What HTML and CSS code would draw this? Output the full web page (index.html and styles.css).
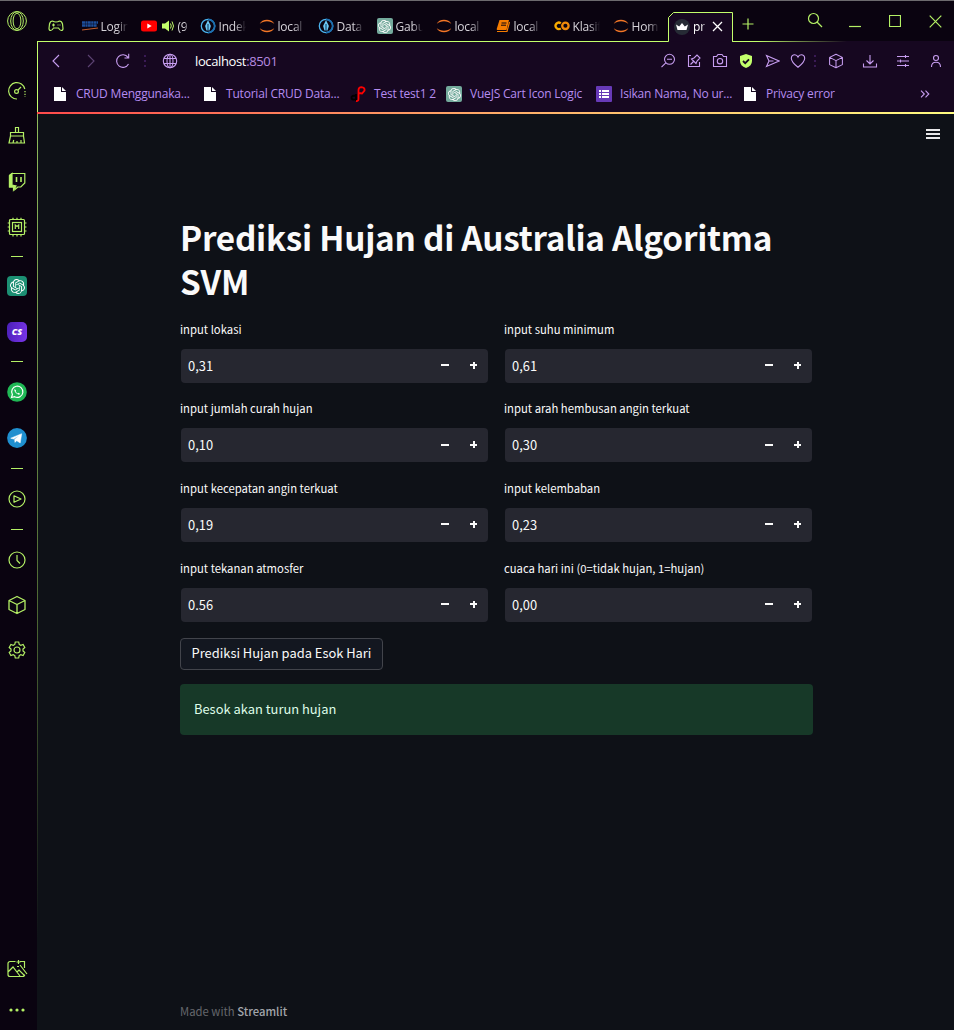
FILE: index.html
```html
<!DOCTYPE html>
<html lang="id">
<head>
<meta charset="utf-8">
<title>prediksi</title>
<link rel="stylesheet" href="styles.css">
</head>
<body>
<svg class="defs" width="0" height="0">
  <defs>
    <symbol id="knot" viewBox="0 0 24 24"><path fill="currentColor" d="M22.2819 9.8211a5.9847 5.9847 0 0 0-.5157-4.9108 6.0462 6.0462 0 0 0-6.5098-2.9A6.0651 6.0651 0 0 0 4.9807 4.1818a5.9847 5.9847 0 0 0-3.9977 2.9 6.0462 6.0462 0 0 0 .7427 7.0966 5.98 5.98 0 0 0 .511 4.9107 6.051 6.051 0 0 0 6.5146 2.9001A5.9847 5.9847 0 0 0 13.2599 24a6.0557 6.0557 0 0 0 5.7718-4.2058 5.9894 5.9894 0 0 0 3.9977-2.9001 6.0557 6.0557 0 0 0-.7475-7.0729zm-9.022 12.6081a4.4755 4.4755 0 0 1-2.8764-1.0408l.1419-.0804 4.7783-2.7582a.7948.7948 0 0 0 .3927-.6813v-6.7369l2.02 1.1686a.071.071 0 0 1 .038.052v5.5826a4.504 4.504 0 0 1-4.4945 4.4944zm-9.6607-4.1254a4.4708 4.4708 0 0 1-.5346-3.0137l.142.0852 4.783 2.7582a.7712.7712 0 0 0 .7806 0l5.8428-3.3685v2.3324a.0804.0804 0 0 1-.0332.0615L9.74 19.9502a4.4992 4.4992 0 0 1-6.1408-1.6464zM2.3408 7.8956a4.485 4.485 0 0 1 2.3655-1.9728V11.6a.7664.7664 0 0 0 .3879.6765l5.8144 3.3543-2.0201 1.1685a.0757.0757 0 0 1-.071 0l-4.8303-2.7865A4.504 4.504 0 0 1 2.3408 7.872zm16.5963 3.8558L13.1038 8.364 15.1192 7.2a.0757.0757 0 0 1 .071 0l4.8303 2.7913a4.4944 4.4944 0 0 1-.6765 8.1042v-5.6772a.79.79 0 0 0-.407-.667zm2.0107-3.0231l-.142-.0852-4.7735-2.7818a.7759.7759 0 0 0-.7854 0L9.409 9.2297V6.8974a.0662.0662 0 0 1 .0284-.0615l4.8303-2.7866a4.4992 4.4992 0 0 1 6.6802 4.66zM8.3065 12.863l-2.02-1.1638a.0804.0804 0 0 1-.038-.0567V6.0742a4.4992 4.4992 0 0 1 7.3757-3.4537l-.142.0805L8.704 5.459a.7948.7948 0 0 0-.3927.6813zm1.0976-2.3654l2.602-1.4998 2.6069 1.4998v2.9994l-2.5974 1.4997-2.6067-1.4997Z"/></symbol>
    <symbol id="jup" viewBox="0 0 16 16"><path d="M.7 6C2.500.6 13 .2 15.300 6 11.500 2.400 4.500 2.400.7 6zM.7 10C3 15.800 13 15.800 15.300 10 11.500 13.600 4.500 13.600.7 10z" fill="#f37626"/></symbol>
    <symbol id="pen" viewBox="0 0 16 16"><circle cx="8" cy="8" r="6.700" fill="none" stroke="#4bb3ed" stroke-width="1.300"/><path d="M8 1.300A6.700 6.700 0 0 1 8 14.700" fill="none" stroke="#1b6fb0" stroke-width="1.800"/><path d="M8 2l2.900 6L9.500 12.500h-3L5.100 8z" fill="#6bc8f5"/><path d="M8 6v8" stroke="#0d3050" stroke-width="1"/></symbol>
    <symbol id="page" viewBox="0 0 12 14"><path d="M0 0h7v5h5v9H0zM8 0l4 4H8z" fill="#fff"/></symbol>
    <symbol id="cube" viewBox="0 0 20 20"><path d="M10 1.500l8 4v9l-8 4-8-4v-9zM2 5.500l8 4 8-4M10 9.500v9" fill="none" stroke="currentColor" stroke-width="1.300" stroke-linejoin="round"/></symbol>
  </defs>
</svg>
<div class="window">
  <aside class="side">
    <div class="slot opera"><svg width="22" height="22" viewBox="0 0 22 22"><circle cx="11" cy="11" r="9.400"/><ellipse cx="11" cy="11" rx="3.900" ry="7.800"/><ellipse cx="11" cy="11" rx="6.300" ry="9.300"/></svg></div>
    <div class="slot"><svg width="20" height="20" viewBox="0 0 20 20"><path d="M10 18A8.200 8.200 0 1 1 17.800 8"/><path d="M18 10v6" stroke-dasharray="1.300 1.500"/><circle cx="9.500" cy="10.500" r="1.900"/><path d="M11 9l3-3"/></svg></div>
    <div class="slot h46"><svg width="20" height="20" viewBox="0 0 20 20"><path d="M8.500 6.500v-5h3v5M3.500 6.500h13v3.500h-13zM3.500 10l-1.500 7h15.500l-1-7M6 17l.7-3M10 17v-2M14 17v-3"/></svg></div>
    <div class="slot"><svg width="20" height="20" viewBox="0 0 20 20"><path d="M2.500 3.500L5 1.500h12.800v9.500l-4 4h-3l-3 2.700V15H2.500z" /><path d="M2.500 3.500L5 1.500v11.500l4 1-2.500 4V15H2.500z" fill="currentColor"/><path d="M9.500 5v5M14 5v5" stroke-width="1.600"/></svg></div>
    <div class="slot h46"><svg width="20" height="20" viewBox="0 0 20 20"><rect x="2.500" y="2.500" width="15" height="15" rx="1"/><rect x="5.500" y="5.500" width="9" height="9"/><path d="M8.300 12v-4l1.700 1.500L11.700 8v4M6 .7v2M10 .7v2M14 .7v2M6 17.500v2M10 17.500v2M14 17.500v2M.7 6h2M.7 10h2M.7 14h2M17.500 6h2M17.500 10h2M17.500 14h2"/></svg></div>
    <div class="slot h13"><i class="dash"></i></div>
    <div class="slot h46"><span class="gpt big"><svg width="15" height="15"><use href="#knot"/></svg></span></div>
    <div class="slot"><span class="cs">CS</span></div>
    <div class="slot h15"><i class="dash"></i></div>
    <div class="slot h46"><svg width="20" height="20" viewBox="0 0 20 20"><circle cx="10" cy="10" r="9.800" fill="#1fb855" stroke="none"/><path d="M4.500 15.500l.9-3A5.600 5.600 0 1 1 7.600 14.700z" stroke="#fff"/><path d="M7.700 7c-1 1 .3 3.200 1.800 4.500s3.200 1.600 3.500.3l-1.500-1-.8.6c-1-.4-1.700-1.200-2.100-2.100l.5-.8z" fill="#fff" stroke="none"/></svg></div>
    <div class="slot"><svg width="20" height="20" viewBox="0 0 20 20"><circle cx="10" cy="10" r="9.900" fill="#1f8fcf" stroke="none"/><path d="M3.700 10.200l11-4.500-1.500 9.300-3.500-2.300-1.700 1.700-.4-3 4.500-4-5.500 3.600z" fill="#fff" stroke="#fff" stroke-width=".5"/></svg></div>
    <div class="slot h16"><i class="dash"></i></div>
    <div class="slot"><svg width="20" height="20" viewBox="0 0 20 20"><circle cx="10" cy="10" r="8"/><path d="M7 6.800l7 3.200-7 3.200z" stroke-linejoin="round"/></svg></div>
    <div class="slot h16"><i class="dash"></i></div>
    <div class="slot"><svg width="20" height="20" viewBox="0 0 20 20"><circle cx="10" cy="10" r="8"/><path d="M10 5v5.500l3 3"/></svg></div>
    <div class="slot"><svg width="20" height="20"><use href="#cube"/></svg></div>
    <div class="slot"><svg width="20" height="20" viewBox="0 0 20 20"><circle cx="10" cy="10" r="3"/><path d="M8.300 2h3.400l.5 2.400 1.600.9 2.300-.8 1.700 3-1.800 1.600v1.800l1.800 1.600-1.700 3-2.300-.8-1.600.9-.5 2.400H8.300l-.5-2.400-1.600-.9-2.300.8-1.700-3L4 10.900V9.100L2.200 7.500l1.700-3 2.300.8 1.600-.9z"/></svg></div>
    <div class="grow"></div>
    <div class="slot h42"><svg width="22" height="18" viewBox="0 0 22 18"><path d="M9.500 1.500H4A2 2 0 0 0 2 3.500v11a2 2 0 0 0 2 2h12.500q2 0 2-2M2 12l5-5 7 9M11 12l2-2 6 6M14 5l7 9M14 1.500h4.500V8"/><path d="M12.500 0v4M10.500 2h4M11 6.500h2" /></svg></div>
    <div class="slot h40"><svg width="18" height="4" viewBox="0 0 18 4"><g fill="currentColor" stroke="none"><circle cx="3" cy="2" r="1.600"/><circle cx="9" cy="2" r="1.600"/><circle cx="15" cy="2" r="1.600"/></g></svg></div>
  </aside>
  <main class="main">
    <header class="tabs">
      <div class="pad"><svg width="16" height="14" viewBox="0 0 16 14"><path d="M4.500 2q1.500 1 3.500 1t3.500-1q2.300 0 3 3l.5 4.500q0 2-1.800 2-1.200 0-2.700-2.500h-5Q4 11.500 2.800 11.500 1 11.500 1 9.500L1.500 5q.7-3 3-3zM5.500 4.500v3M4 6h3M9.500 6h1M11.500 6h1"/></svg></div>
      <div class="tab"><svg width="16" height="16" viewBox="0 0 16 16"><path d="M0 4.500h16M0 7.500h15" stroke="#1d4f9a" stroke-width="2.300" stroke-dasharray="3 .4 2 .4"/><path d="M0 12l16-2" stroke="#c5602f" stroke-width="1.200"/></svg><span>Login</span></div>
      <div class="tab"><svg width="16" height="16" viewBox="0 0 16 16"><rect y="2.500" width="16" height="11" rx="2.500" fill="#f00"/><path d="M6.300 5.500L10.700 8l-4.400 2.500z" fill="#fff"/></svg><svg class="snd" width="14" height="14" viewBox="0 0 14 14"><path d="M1 4.500h3L8 1.500v11L4 9.500H1z" fill="#c3ff6b"/><path d="M9.500 4.500q1.500 2.500 0 5M11 2.500q3 4.500 0 9" fill="none" stroke="#c3ff6b"/></svg><span class="yt">(9</span></div>
      <div class="tab"><svg width="16" height="16"><use href="#pen"/></svg><span>Indek</span></div>
      <div class="tab"><svg width="16" height="16"><use href="#jup"/></svg><span>local</span></div>
      <div class="tab"><svg width="16" height="16"><use href="#pen"/></svg><span>Data</span></div>
      <div class="tab"><b class="gpt"><svg width="13" height="13"><use href="#knot"/></svg></b><span>Gabu</span></div>
      <div class="tab"><svg width="16" height="16"><use href="#jup"/></svg><span>local</span></div>
      <div class="tab"><svg width="16" height="16" viewBox="0 0 16 16"><path d="M4.500 2h9.500l-2.500 10H3Q1 12 2 10z" fill="#f57c00"/><path d="M6.500 5h5M6 7.200h5" stroke="#0a0310" stroke-width="1"/><path d="M2 13.500h10L14.500 4" stroke="#f57c00" stroke-width="1.200" fill="none"/></svg><span>local</span></div>
      <div class="tab"><svg width="16" height="16" viewBox="0 0 16 16" fill="none" stroke-width="2.300"><path d="M6.800 5.300a3.200 3.200 0 1 0 0 5" stroke="#f9ab00"/><circle cx="11.400" cy="7.800" r="3.200" stroke="#f08a0a"/></svg><span>Klasif</span></div>
      <div class="tab"><svg width="16" height="16"><use href="#jup"/></svg><span class="home">Hom</span></div>
      <div class="active"><svg class="frame" width="65" height="30" viewBox="0 0 65 30"><path d="M0 29.500h.5V5.500L5.500.5h59v29h.5" fill="#160720" stroke="#c3ff6b"/></svg>
        <svg class="crown" width="16" height="16" viewBox="0 0 16 16"><circle cx="8" cy="8" r="8" fill="#262b35"/><path d="M2 5.500L5.200 7.500 8 4 10.800 7.500 14 5.500l-1.500 5.500h-9z" fill="#fff"/></svg><span>pr</span><svg class="x" width="11" height="11" viewBox="0 0 11 11"><path d="M1 1l9 9M10 1l-9 9" stroke="#fff" stroke-width="1.300"/></svg></div>
      <svg class="plus" width="12" height="12" viewBox="0 0 12 12"><path d="M6 .5v11M.5 6h11"/></svg>
      <div class="grow"></div>
      <svg class="ctl search" width="16" height="16" viewBox="0 0 16 16"><circle cx="6.500" cy="6.500" r="5"/><path d="M10 10l5 5"/></svg>
      <svg class="ctl min" width="12" height="14" viewBox="0 0 12 14"><path d="M0 12.500h12"/></svg>
      <svg class="ctl max" width="12" height="12" viewBox="0 0 12 12"><path d="M.5.5h11v11H.5z"/></svg>
      <svg class="ctl close" width="13" height="13" viewBox="0 0 13 13"><path d="M.7.7l11.600 11.600M12.300.7L.7 12.300"/></svg>
    </header>
    <div class="rule"></div>
    <div class="toolbar">
      <i class="w36"><svg width="10" height="14" viewBox="0 0 10 14"><path d="M8 1L2 7l6 6"/></svg></i>
      <i class="w33 dim"><svg width="10" height="14" viewBox="0 0 10 14"><path d="M2 1l6 6-6 6"/></svg></i>
      <i class="w32"><svg width="16" height="16" viewBox="0 0 16 16"><path d="M13.500 11A6.300 6.300 0 1 1 13 4.300M13.700.8v4.200H9.500"/></svg></i>
      <i class="w12 dots"><b></b><b></b><b></b></i>
      <i class="w38"><svg width="16" height="16" viewBox="0 0 16 16"><circle cx="8" cy="8" r="6.700"/><ellipse cx="8" cy="8" rx="3" ry="6.700"/><path d="M8 1.300v13.400M2 5.500h12M2 10.500h12"/></svg></i>
      <span class="url">localhost<em>:8501</em></span>
      <i class="grow"></i>
      <i class="w26"><svg width="16" height="16" viewBox="0 0 16 16"><circle cx="9.500" cy="6.300" r="5"/><path d="M5.800 9.800L1.500 14.200M7 6.300h5"/></svg></i>
      <i class="w26"><svg width="16" height="16" viewBox="0 0 16 16"><path d="M5 2.500H2.500v11h11V9M4.500 11.500l3-3M5.500 6l4.500 4.500 1-2.500 3-3-3-3-3 3z"/></svg></i>
      <i class="w26"><svg width="16" height="16" viewBox="0 0 16 16"><path d="M1.500 3.500h3l1.500-2h4l1.500 2h3v10h-13z"/><circle cx="8" cy="8.200" r="2.700"/></svg></i>
      <i class="w26"><svg width="16" height="16" viewBox="0 0 16 16"><path d="M8 1l6 2v5q0 5-6 7-6-2-6-7V3z" fill="#c3ff6b" stroke="none"/><path d="M5 8l2.200 2.200L11 6.300" stroke="#160720" stroke-width="1.800"/></svg></i>
      <i class="w26"><svg width="16" height="16" viewBox="0 0 16 16"><path d="M2.500 2.500L15 8 2.500 13.500 5 8zM5 8H9.500"/></svg></i>
      <i class="w26"><svg width="16" height="16" viewBox="0 0 16 16"><path d="M8 14.300Q1.300 9 1.300 5.200 1.500 1.700 4.800 1.700 7 1.700 8 4q1-2.300 3.200-2.300 3.300 0 3.500 3.500Q14.700 9 8 14.300z"/></svg></i>
      <i class="w8 dots"><b></b><b></b><b></b></i>
      <i class="w34"><svg width="16" height="16"><use href="#cube"/></svg></i>
      <i class="w33"><svg width="16" height="16" viewBox="0 0 16 16"><path d="M8 2v8.500M4.500 7.500L8 11l3.500-3.500M1.500 10.500v3.500h13v-3.500"/></svg></i>
      <i class="w34"><svg width="14" height="14" viewBox="0 0 14 14"><path d="M1 2.500h12M1 7h12M1 11.500h12M9.500 1v3M4.500 5.500v3M9.500 10v3"/></svg></i>
      <i class="w32"><svg width="14" height="14" viewBox="0 0 14 14"><circle cx="7" cy="4" r="2.500"/><path d="M2.500 13Q2.500 8.300 7 8.300t4.500 4.700"/></svg></i>
    </div>
    <nav class="marks">
      <a class="m1"><svg width="12" height="14"><use href="#page"/></svg><span>CRUD Menggunaka...</span></a>
      <a class="m2"><svg width="12" height="14"><use href="#page"/></svg><span>Tutorial CRUD Data...</span></a>
      <a class="m3"><svg width="16" height="16" viewBox="0 0 16 16" fill="none" stroke-width="1.800"><path d="M6 15V8M6 9.500Q1 9.500 1.500 12 2 14.500 6 13" stroke="#000"/><path d="M6 15q2.500.3 2.500-2V4Q8.500 1.200 11.500 1.200 15 1.500 14.500 4.500L12 7.500 9 7" stroke="#f00"/></svg><span>Test test1 2</span></a>
      <a class="m4"><b class="gpt"><svg width="13" height="13"><use href="#knot"/></svg></b><span>VueJS Cart Icon Logic</span></a>
      <a class="m5"><svg width="16" height="16" viewBox="0 0 16 16"><rect width="16" height="16" rx="1" fill="#673ab7"/><path d="M3 5h2M6 5h7M3 8h2M6 8h7M3 11h2M6 11h7" stroke="#fff" stroke-width="1.900"/></svg><span>Isikan Nama, No ur...</span></a>
      <a class="m6"><svg width="12" height="14"><use href="#page"/></svg><span>Privacy error</span></a>
      <svg class="more" width="10" height="8" viewBox="0 0 10 8"><path d="M1 .7L4.300 4 1 7.300M5.500.7L8.800 4 5.500 7.300" fill="none" stroke="#c79df0" stroke-width="1.100"/></svg>
    </nav>
    <div class="load"></div>
    <section class="app">
      <div class="menu"><b></b><b></b><b></b></div>
      <div class="content">
        <h1>Prediksi Hujan di Australia Algoritma SVM</h1>
        <form class="grid">
          <div class="field"><label>input lokasi</label><div class="num"><span>0,31</span><i class="minus"></i><i class="add"></i></div></div>
          <div class="field"><label>input suhu minimum</label><div class="num"><span>0,61</span><i class="minus"></i><i class="add"></i></div></div>
          <div class="field"><label>input jumlah curah hujan</label><div class="num"><span>0,10</span><i class="minus"></i><i class="add"></i></div></div>
          <div class="field"><label>input arah hembusan angin terkuat</label><div class="num"><span>0,30</span><i class="minus"></i><i class="add"></i></div></div>
          <div class="field"><label>input kecepatan angin terkuat</label><div class="num"><span>0,19</span><i class="minus"></i><i class="add"></i></div></div>
          <div class="field"><label>input kelembaban</label><div class="num"><span>0,23</span><i class="minus"></i><i class="add"></i></div></div>
          <div class="field"><label>input tekanan atmosfer</label><div class="num"><span>0.56</span><i class="minus"></i><i class="add"></i></div></div>
          <div class="field"><label>cuaca hari ini (0=tidak hujan, 1=hujan)</label><div class="num"><span>0,00</span><i class="minus"></i><i class="add"></i></div></div>
        </form>
        <button class="btn">Prediksi Hujan pada Esok Hari</button>
        <div class="alert"><span>Besok akan turun hujan</span></div>
      </div>
      <footer>Made with <span>Streamlit</span></footer>
    </section>
  </main>
</div>
</body>
</html>
```
FILE: styles.css
```css
* { box-sizing: border-box; }
body { margin: 0; background: #0a0310; font-family: "Open Sans", "Noto Sans", sans-serif; }
.defs { position: absolute; }
svg { display: block; flex: none; }
.window { display: flex; width: 954px; height: 1030px; border-top: 1px solid #6c6a6e; overflow: hidden; }
.grow { flex: 1; }

/* sidebar */
.side { width: 37px; display: flex; flex-direction: column; color: #b4f065; margin-top: -1px; height: 1030px; }
.side svg { fill: none; stroke: #b4f065; stroke-width: 1.2; }
.slot { height: 45px; width: 34px; display: flex; align-items: center; justify-content: center; flex: none; }
.opera { height: 42px; margin-bottom: 26px; }
.side .opera svg { stroke-width: 1; }
.h46 { height: 46px; } .h13 { height: 13px; } .h15 { height: 15px; } .h16 { height: 16px; } .h42 { height: 42px; } .h40 { height: 40px; }
.dash { width: 12px; height: 1px; background: #b4f065; }
.gpt { width: 16px; height: 16px; border-radius: 2px; background: #74aa9c; color: #fff; display: flex; align-items: center; justify-content: center; flex: none; }
.gpt svg, .side .gpt svg { stroke: none; }
.big { width: 20px; height: 20px; border-radius: 4px; background: #1c8f73; }
.cs { width: 20px; height: 20px; border-radius: 5px 5px 5px 8px; background: linear-gradient(100deg, #4a1fb8, #7a35e8); color: #fff; font: italic 800 9px/20px "Open Sans", sans-serif; text-align: center; }

/* tab strip */
.main { width: 917px; display: flex; flex-direction: column; }
.tabs { height: 40px; display: flex; align-items: flex-start; color: #d5d2d8; font-size: 12px; }
.pad { width: 44px; padding: 18px 0 0 11px; }
.pad svg, .plus, .ctl { fill: none; stroke: #b4f065; stroke-width: 1.2; }
.tab { width: 59px; height: 26px; margin-top: 12px; display: flex; align-items: center; padding-left: .5px; gap: 3px; white-space: nowrap; }
.tab span { width: 27px; overflow: hidden; line-height: 20px; padding-top: 1px; letter-spacing: -.2px; -webkit-mask-image: linear-gradient(90deg, #000 60%, transparent); mask-image: linear-gradient(90deg, #000 60%, transparent); }
.tab .snd { margin-left: 1px; }
.tab span.yt { width: 11px; }
.active { width: 65px; height: 30px; margin: 11px 0 -1px -3px; position: relative; display: flex; align-items: center; color: #fff; padding: 0 0 1px 6px; }
.frame { position: absolute; left: 0; top: 0; }
.crown, .x, .active span { position: relative; }
.active span { width: 14px; margin: 0 5px 0 3px; line-height: 20px; padding-top: 1px; -webkit-mask-image: linear-gradient(90deg, #000 60%, transparent); mask-image: linear-gradient(90deg, #000 60%, transparent); }
.plus { margin: 17px 0 0 8.500px; }
.search { margin: 11px 26px 0 0; }
.min { margin: 13px 28px 0 0; }
.max { margin: 14px 28px 0 0; }
.close { margin: 14px 12.500px 0 0; }
.rule { height: 1px; background: linear-gradient(90deg, #c3ff6b 631px, #160720 631px, #160720 695px, #c3ff6b 695px, #c3ff6b 720px, #160720 810px); }

/* address bar */
.toolbar { height: 38px; display: flex; align-items: center; background: #160720; border-left: 1px solid #c3ff6b; padding-right: 2px; }
.toolbar i { display: flex; align-items: center; justify-content: center; height: 38px; color: #c79df0; }
.toolbar svg { fill: none; stroke: #c79df0; stroke-width: 1.1; }
.w8 { width: 8px; } .w12 { width: 12px; } .w26 { width: 26px; } .w32 { width: 32px; } .w33 { width: 33px; } .w34 { width: 34px; } .w36 { width: 36px; } .w38 { width: 38px; }
.toolbar .dim { opacity: .4; }
.toolbar .dots { flex-direction: column; gap: 3px; }
.dots b { width: 2px; height: 2px; background: #3a1a55; }
.url { font-size: 13px; color: #fff; margin-left: 6px; letter-spacing: -.37px; }
.url em { font-style: normal; color: #b68ae0; }

/* bookmarks */
.marks { height: 32px; display: flex; background: #160720; border-left: 1px solid #c3ff6b; padding-left: 16px; font-size: 12px; letter-spacing: -.2px; color: #b58cf0; }
.marks a { display: flex; align-items: center; height: 28px; white-space: nowrap; gap: 10px; flex: none; }
.marks a span { margin-top: -1px; }
.m1 { width: 150px; } .m2 { width: 146px; } .m3 { width: 96px; } .m4 { width: 150px; } .m5 { width: 148px; } .m6 { width: 176px; }
.marks .m3, .marks .m4, .marks .m5 { gap: 8px; }
.more { margin-top: 10px; }
.load { height: 2px; background: linear-gradient(90deg, #ff4b4b, #ffa366 45%, #fffd80); }

/* application */
.app { flex: 1; background: #0e1117; border-left: 1px solid; border-image: linear-gradient(#90bb5c, #4d6633 55%, #0e1117 90%) 1; display: flex; flex-direction: column; font-family: "Noto Sans CJK SC", "Open Sans", sans-serif; color: #fafafa; }
.menu { height: 40px; display: flex; flex-direction: column; gap: 2px; align-items: flex-end; padding: 15px 14px 0 0; flex: none; }
.menu b { width: 14px; height: 2px; background: #e8e8ea; }
.content { margin: 61px 0 0 142px; width: 633px; display: flex; flex-direction: column; align-items: flex-start; }
h1 { margin: 0 0 17.800px; font-size: 33.300px; letter-spacing: -.25px; line-height: 44px; font-weight: 700; height: 88px; }
.grid { display: grid; grid-template-columns: 308px 308px; column-gap: 16px; }
.field { height: 79.600px; }
label { display: block; height: 28px; font-size: 11.300px; line-height: 17px; white-space: nowrap; }
.num { height: 34px; margin-left: 1px; background: #262730; border-radius: 4px; display: flex; align-items: center; padding-left: 7px; }
.num span { font-size: 12.900px; line-height: 20px; flex: 1; }
.minus, .add { width: 8px; height: 8px; margin: 0 21px 1px 0; background: linear-gradient(#fafafa, #fafafa) center / 8px 2px no-repeat; }
.add { width: 7px; height: 7px; margin-right: 11px; background: linear-gradient(#fafafa, #fafafa) center / 7px 2px no-repeat, linear-gradient(#fafafa, #fafafa) center / 2px 7px no-repeat; }
.btn { width: 203px; height: 32px; margin-top: -1.400px; padding: 0 0 2px; background: #131720; border: 1px solid #42444b; border-radius: 4px; color: #fafafa; font: 12.900px/20px "Noto Sans CJK SC", sans-serif; white-space: nowrap; }
.alert { width: 633px; height: 51px; margin-top: 14px; background: #173928; border-radius: 4px; color: #dffde9; font-size: 12.900px; padding: 15px 14px; line-height: 20px; }
footer { margin: auto 0 10px 142px; font-size: 11.300px; line-height: 18px; color: #65676c; }
footer span { color: #a2a5aa; font-weight: 500; }
```
